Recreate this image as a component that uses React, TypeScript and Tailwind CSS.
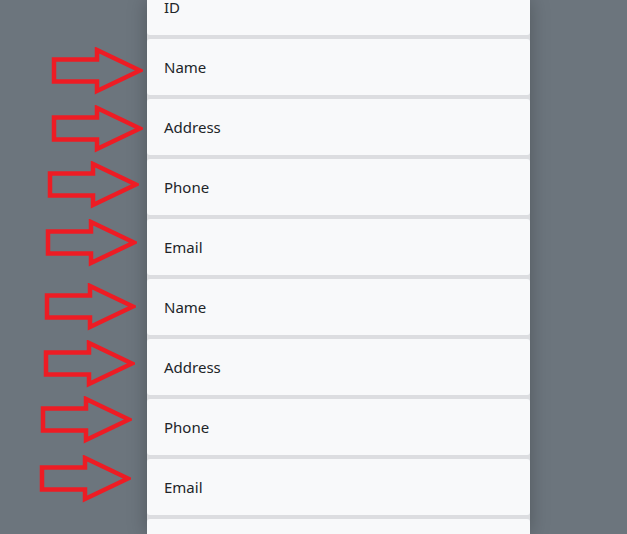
import React from "react";

const rows = ["ID", "Name", "Address", "Phone", "Email", "Name", "Address", "Phone", "Email", ""];

// hand-placed annotation arrows: left edge and top of the head
const arrows = [
  { x: 54, y: 50 },
  { x: 54, y: 108 },
  { x: 50, y: 164 },
  { x: 48, y: 222 },
  { x: 47, y: 286 },
  { x: 46, y: 343 },
  { x: 43, y: 399 },
  { x: 42, y: 458 },
];

const Arrow = ({ x, y }: { x: number; y: number }) => (
  <svg
    className="absolute"
    style={{ left: x - 3, top: y - 3 }}
    width="92"
    height="48"
    viewBox="-3 -3 92 48"
  >
    <polygon
      points="0,9.5 43,9.5 43,0 86,20.5 43,41 43,31.5 0,31.5"
      fill="none"
      stroke="#ed1c24"
      strokeWidth="4.5"
      strokeLinejoin="miter"
    />
  </svg>
);

const App = () => {
  return (
    <div className="relative h-[534px] w-[627px] overflow-hidden bg-[#6c757d] font-['Noto_Sans','Open_Sans',sans-serif]">
      <div className="ml-[147px] w-[383px] h-full overflow-hidden bg-[#dcdde0] shadow-[0_0_18px_rgba(0,0,0,0.25)]">
        <div className="-mt-[21px] flex flex-col gap-1">
          {rows.map((label, i) => (
            <div
              key={i}
              className="flex h-[56px] items-center rounded-[3px] bg-[#f8f9fa] pl-[17px] text-[15px] text-[#212529]"
            >
              {label}
            </div>
          ))}
        </div>
      </div>
      {arrows.map((a, i) => (
        <Arrow key={i} x={a.x} y={a.y} />
      ))}
    </div>
  );
};

export default App;
